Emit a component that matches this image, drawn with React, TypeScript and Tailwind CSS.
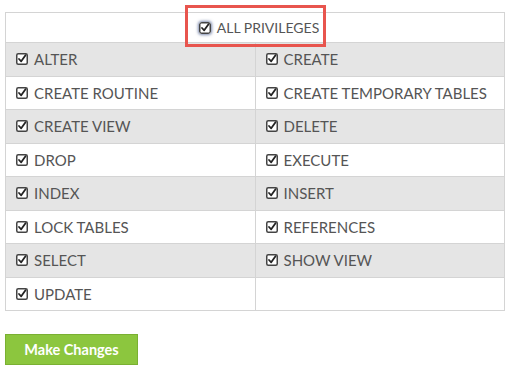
import React from 'react'

const rows: [string, string | null][] = [
  ['ALTER', 'CREATE'],
  ['CREATE ROUTINE', 'CREATE TEMPORARY TABLES'],
  ['CREATE VIEW', 'DELETE'],
  ['DROP', 'EXECUTE'],
  ['INDEX', 'INSERT'],
  ['LOCK TABLES', 'REFERENCES'],
  ['SELECT', 'SHOW VIEW'],
  ['UPDATE', null],
]

function CheckIcon({ focused = false }: { focused?: boolean }) {
  return (
    <svg
      width="12"
      height="12"
      viewBox="0 0 12 12"
      className={`shrink-0 ${focused ? 'rounded-[3px] shadow-[0_0_3px_1px_rgba(70,90,140,0.7)]' : ''}`}
    >
      <rect x="0.75" y="0.75" width="10.5" height="10.5" rx="1.5" fill="#fff" stroke="#444" strokeWidth="1.5" />
      <path d="M3 6L5.2 8.3L9.5 2.2" fill="none" stroke="#222" strokeWidth="1.8" strokeLinecap="round" strokeLinejoin="round" />
    </svg>
  )
}

function Cell({ label }: { label: string | null }) {
  return (
    <div className="flex-1 flex items-center gap-[6px] pl-[10px]">
      {label && (
        <>
          <CheckIcon />
          <span>{label}</span>
        </>
      )}
    </div>
  )
}

export default function App() {
  return (
    <div className="w-[510px] h-[370px] bg-white pl-[5px] pt-[12px] text-[15px] text-[#555] font-['Lato','Open_Sans',sans-serif]">
      <div className="w-[500px] border border-[#d4d4d4]">
        <div className="relative h-[29px] flex items-center justify-center">
          <div className="relative flex items-center gap-[6px] pl-[8px] text-[14px]">
            <CheckIcon focused />
            <span>ALL PRIVILEGES</span>
            <div className="absolute left-[-6px] right-[-7px] top-[-12px] bottom-[-9px] border-[3px] border-[#e8554e]" />
          </div>
        </div>
        {rows.map(([a, b], i) => (
          <div
            key={a}
            className={`flex h-[33.5px] border-t border-[#d4d4d4] ${i % 2 === 0 ? 'bg-[#e5e5e5]' : 'bg-white'}`}
          >
            <Cell label={a} />
            <div className="w-px bg-[#d4d4d4]" />
            <Cell label={b} />
          </div>
        ))}
      </div>
      <button className="mt-[23px] w-[133px] h-[31px] bg-[#8cc63e] border border-[#7ab032] text-white font-bold text-[14.5px]">
        Make Changes
      </button>
    </div>
  )
}
